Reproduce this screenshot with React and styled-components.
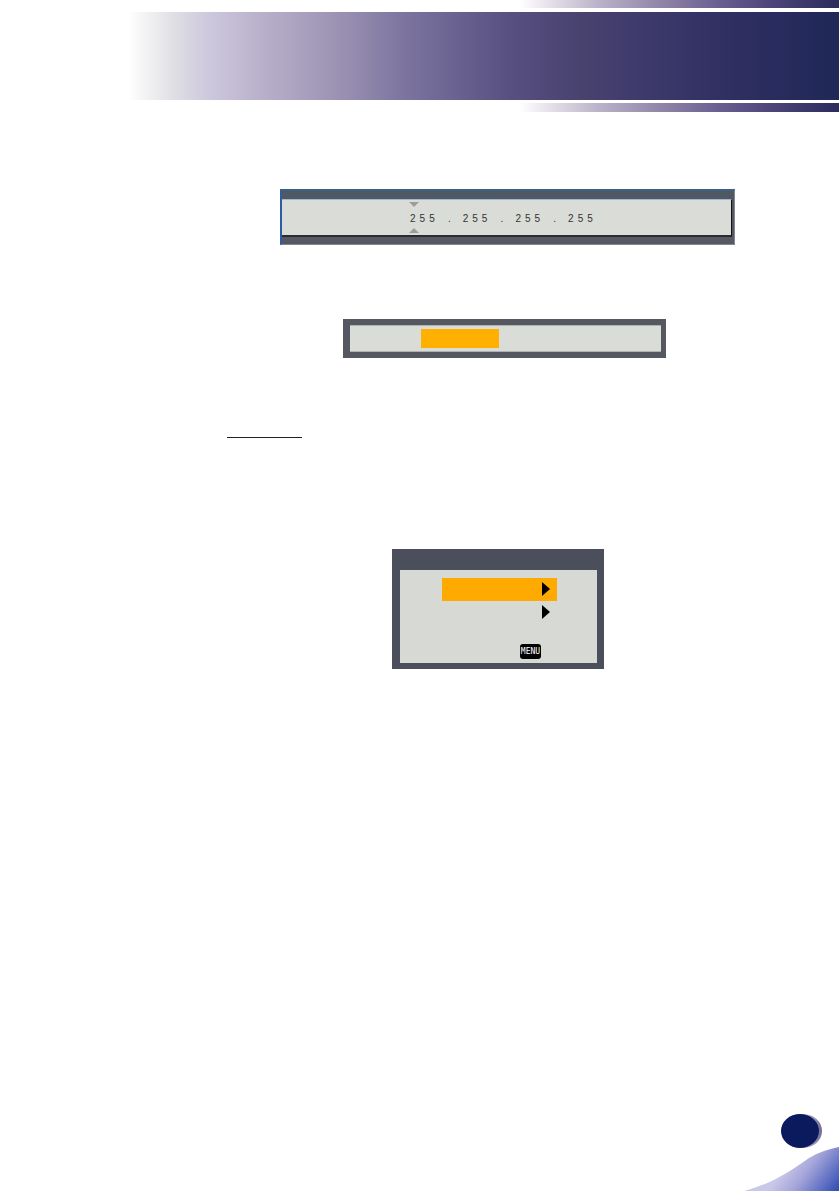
import React from "react";
import styled, { createGlobalStyle } from "styled-components";

const GlobalStyle = createGlobalStyle`
  * { box-sizing: border-box; }
  body {
    margin: 0;
    background: #fff;
    color: #222;
    font-family: "Liberation Sans", Arial, sans-serif;
  }
`;

const Page = styled.div`
  min-height: 100vh;
  display: flex;
  flex-direction: column;
`;

const Header = styled.header`
  display: flex;
  flex-direction: column;
`;

const Stripe = styled.div`
  height: ${(p) => p.$height}px;
  margin-left: 62%;
  background: linear-gradient(
    to right,
    #fff 0%,
    #e6e1ea 9%,
    #b9b2c8 25%,
    #9185a8 44%,
    #6a5f91 62%,
    #4e467a 78%,
    #2b2b5c 100%
  );
`;

const Band = styled.div`
  height: 88px;
  margin: 4px 0 3px 128px;
  background: linear-gradient(
    to right,
    #fff 0%,
    #dddce2 7%,
    #cfc9de 11%,
    #b5adc8 20%,
    #9a91b2 30%,
    #7f77a1 38%,
    #6a6290 46%,
    #574f80 54%,
    #48426f 64%,
    #3c386a 74%,
    #2e2e61 86%,
    #1f2858 100%
  );
`;

const Content = styled.main`
  flex: 1;
  display: flex;
  flex-direction: column;
  align-items: flex-start;
  padding: 77px 16px 0 227px;
`;

const AddressPanel = styled.section`
  width: 455px;
  max-width: 100%;
  margin-left: 53px;
  padding: 8px 2px 7px 0;
  border: solid;
  border-width: 2px 1px 1px 2px;
  border-color: #3c6186 #85878d #85878d #2c5ca6;
  background: linear-gradient(#4f5962, #565866);
`;

const AddressField = styled.div`
  height: 38px;
  padding: 2px 0 2px 128px;
  border: solid;
  border-width: 1px 1px 2px 0;
  border-color: #9db9d9 #111 #2b2b2e;
  background: #dadcd7;
  display: flex;
  flex-direction: column;
  align-items: flex-start;
  justify-content: space-between;
`;

const Caret = styled.svg`
  display: block;
  width: 10px;
  height: 5px;
  margin-left: -1px;
  fill: #9c9d99;
`;

const Address = styled.output`
  display: flex;
  gap: 12px;
  padding-top: 2px;
  font-size: 10px;
  line-height: 12px;
  color: #333;
`;

const Octet = styled.span`
  display: flex;
  gap: 4px;
`;

const Dot = styled.span`
  width: 4px;
  text-align: right;
`;

const OptionPanel = styled.section`
  width: 323px;
  max-width: 100%;
  height: 39px;
  margin: 74px 0 0 116px;
  padding: 4px 0 4px 71px;
  border: solid #555861;
  border-width: 6px 5px 6px 7px;
  background: #dadcd7;
  box-shadow: inset 0 1px #aeb1b0, inset 0 -1px #aeb1b0;
`;

const Option = styled.button`
  display: block;
  width: 78px;
  height: 19px;
  padding: 0;
  border: 0;
  background: #ffb000;
`;

const Rule = styled.hr`
  width: 75px;
  height: 1px;
  margin: 79px 0 0;
  border: 0;
  background: #222;
`;

const Dialog = styled.section`
  width: 212px;
  height: 120px;
  margin: 111px 0 0 165px;
  border: solid #4b4f5b;
  border-width: 21px 7px 6px 8px;
  background: #d6d9d4;
  padding: 8px 0 4px 42px;
  display: flex;
  flex-direction: column;
  align-items: flex-start;
`;

const MenuItem = styled.button`
  width: 115px;
  height: 23px;
  padding: 0 7px 2px 0;
  border: 0;
  background: ${(p) => (p.$active ? "#ffaa00" : "transparent")};
  display: flex;
  align-items: center;
  justify-content: flex-end;
`;

const MenuKey = styled.button`
  width: 21px;
  height: 15px;
  margin: auto 0 0 78px;
  padding: 0;
  border: 0;
  border-radius: 3px;
  background: #000;
  color: #fff;
  font-family: "DejaVu Sans Mono", monospace;
  font-size: 8px;
  line-height: 15px;
  display: flex;
  justify-content: center;
`;

const Footer = styled.footer`
  display: flex;
  justify-content: flex-end;
`;

const Corner = styled.svg`
  display: block;
  width: 96px;
  height: 78px;
`;

const octets = ["255", "255", "255", "255"];

function Arrow() {
  return (
    <svg width="8" height="14" viewBox="0 0 8 14" aria-hidden="true">
      <path d="M0 0L8 7L0 14Z" fill="#000" />
    </svg>
  );
}

export default function App() {
  return (
    <Page>
      <GlobalStyle />
      <Header>
        <Stripe $height={8} />
        <Band />
        <Stripe $height={9} />
      </Header>
      <Content>
        <AddressPanel>
          <AddressField>
            <Caret viewBox="0 0 10 5" aria-hidden="true">
              <path d="M0 0H10L5 5Z" />
            </Caret>
            <Address>
              {octets.map((octet, i) => (
                <React.Fragment key={i}>
                  {i > 0 && <Dot>.</Dot>}
                  <Octet>
                    {octet.split("").map((digit, j) => (
                      <span key={j}>{digit}</span>
                    ))}
                  </Octet>
                </React.Fragment>
              ))}
            </Address>
            <Caret viewBox="0 0 10 5" aria-hidden="true">
              <path d="M0 5H10L5 0Z" />
            </Caret>
          </AddressField>
        </AddressPanel>
        <OptionPanel>
          <Option type="button" />
        </OptionPanel>
        <Rule />
        <Dialog>
          <MenuItem type="button" $active>
            <Arrow />
          </MenuItem>
          <MenuItem type="button">
            <Arrow />
          </MenuItem>
          <MenuKey type="button">MENU</MenuKey>
        </Dialog>
      </Content>
      <Footer>
        <Corner viewBox="0 0 96 78" aria-hidden="true">
          <defs>
            <linearGradient
              id="wave"
              gradientUnits="userSpaceOnUse"
              x1="48"
              y1="46"
              x2="94"
              y2="80"
            >
              <stop offset="0" stopColor="#c9c8e8" />
              <stop offset="0.35" stopColor="#a5a5da" />
              <stop offset="0.7" stopColor="#6674c5" />
              <stop offset="1" stopColor="#2f4db2" />
            </linearGradient>
            <linearGradient id="rim" x1="0" y1="0" x2="1" y2="0">
              <stop offset="0.5" stopColor="#d5d2e2" />
              <stop offset="1" stopColor="#6a6896" />
            </linearGradient>
          </defs>
          <path d="M1 78C28 71 46 59 66 45C76 39 86 36 96 34V78Z" fill="url(#wave)" />
          <ellipse cx="60" cy="18" rx="19" ry="17" fill="url(#rim)" />
          <ellipse cx="57" cy="18" rx="19" ry="17" fill="#0a1a5c" />
        </Corner>
      </Footer>
    </Page>
  );
}
